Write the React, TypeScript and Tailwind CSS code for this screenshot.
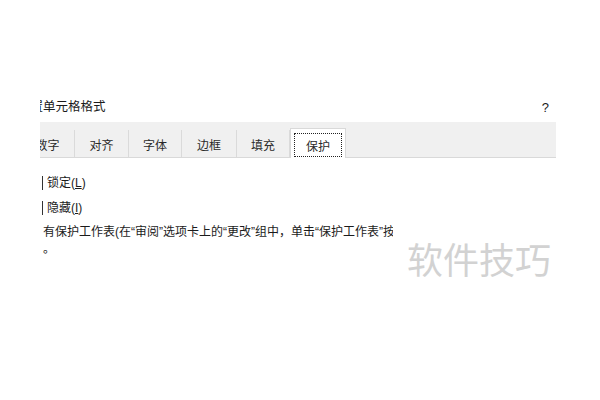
import React from 'react';

const tabs = [
  { label: '数字', w: 'w-[54px]', first: true },
  { label: '对齐', w: 'w-[54px]' },
  { label: '字体', w: 'w-[53px]' },
  { label: '边框', w: 'w-[55px]' },
  { label: '填充', w: 'w-[53px]' },
];

export default function App() {
  return (
    <div
      className="relative w-[600px] h-[400px] overflow-hidden bg-white text-[#1b1b1b]"
      style={{ fontFamily: '"Liberation Sans", "Noto Sans CJK SC", sans-serif' }}
    >
      <div className="pt-[92px] pl-[40px]">
        <div className="w-[516px] overflow-hidden">
          {/* Title */}
          <div className="h-[30px] flex items-center justify-between">
            <span className="-ml-[22px] text-[12.5px] leading-none">设置单元格格式</span>
            <span className="mr-[7px] text-[13px] leading-none">?</span>
          </div>

          {/* Tab bar */}
          <div className="h-[36px] bg-[#f0f0f0] border-b border-[#d9d9d9] flex items-end">
            {tabs.map((t) => (
              <div
                key={t.label}
                className={`${t.w} ${t.first ? '-ml-[19px]' : ''} h-[27px] pt-[5px] shrink-0 flex items-center justify-center border-r border-[#dadada] text-[12px] leading-none text-[#2a2a2a]`}
              >
                {t.label}
              </div>
            ))}
            <div className="w-[56px] h-[30px] -mb-px shrink-0 bg-white border border-b-0 border-[#d9d9d9] px-[3px] pt-[4px] pb-[1px]">
              <div className="h-full pt-[3px] border border-dotted border-[#222] flex items-center justify-center text-[12px] leading-none text-[#2a2a2a]">
                保护
              </div>
            </div>
          </div>

          {/* Content */}
          <div className="pt-[18px] text-[12px] leading-none">
            <div className="h-[14px] flex items-center gap-[4px]">
              <div className="ml-[2px] w-px h-[14px] border-r border-[#333] shrink-0" />
              <span>锁定(<span className="underline">L</span>)</span>
            </div>
            <div className="mt-[11px] h-[14px] flex items-center gap-[4px]">
              <div className="ml-[2px] w-px h-[14px] border-r border-[#333] shrink-0" />
              <span>隐藏(<span className="underline">I</span>)</span>
            </div>
            <div className="mt-[9px] pl-[3px] w-[353px] overflow-hidden whitespace-nowrap leading-[17px]">
              有保护工作表(在“审阅”选项卡上的“更改”组中，单击“保护工作表”按钮)后，锁定单元格或隐藏公式才有效
            </div>
            <div className="pl-[3px] leading-[17px]">。</div>
          </div>
        </div>
      </div>

      {/* Watermark */}
      <div className="absolute left-[407px] top-[240px] text-[36px] leading-none text-[#d2d2d2]" style={{ fontFamily: '"Noto Sans CJK SC", sans-serif' }}>
        软件技巧
      </div>
    </div>
  );
}
